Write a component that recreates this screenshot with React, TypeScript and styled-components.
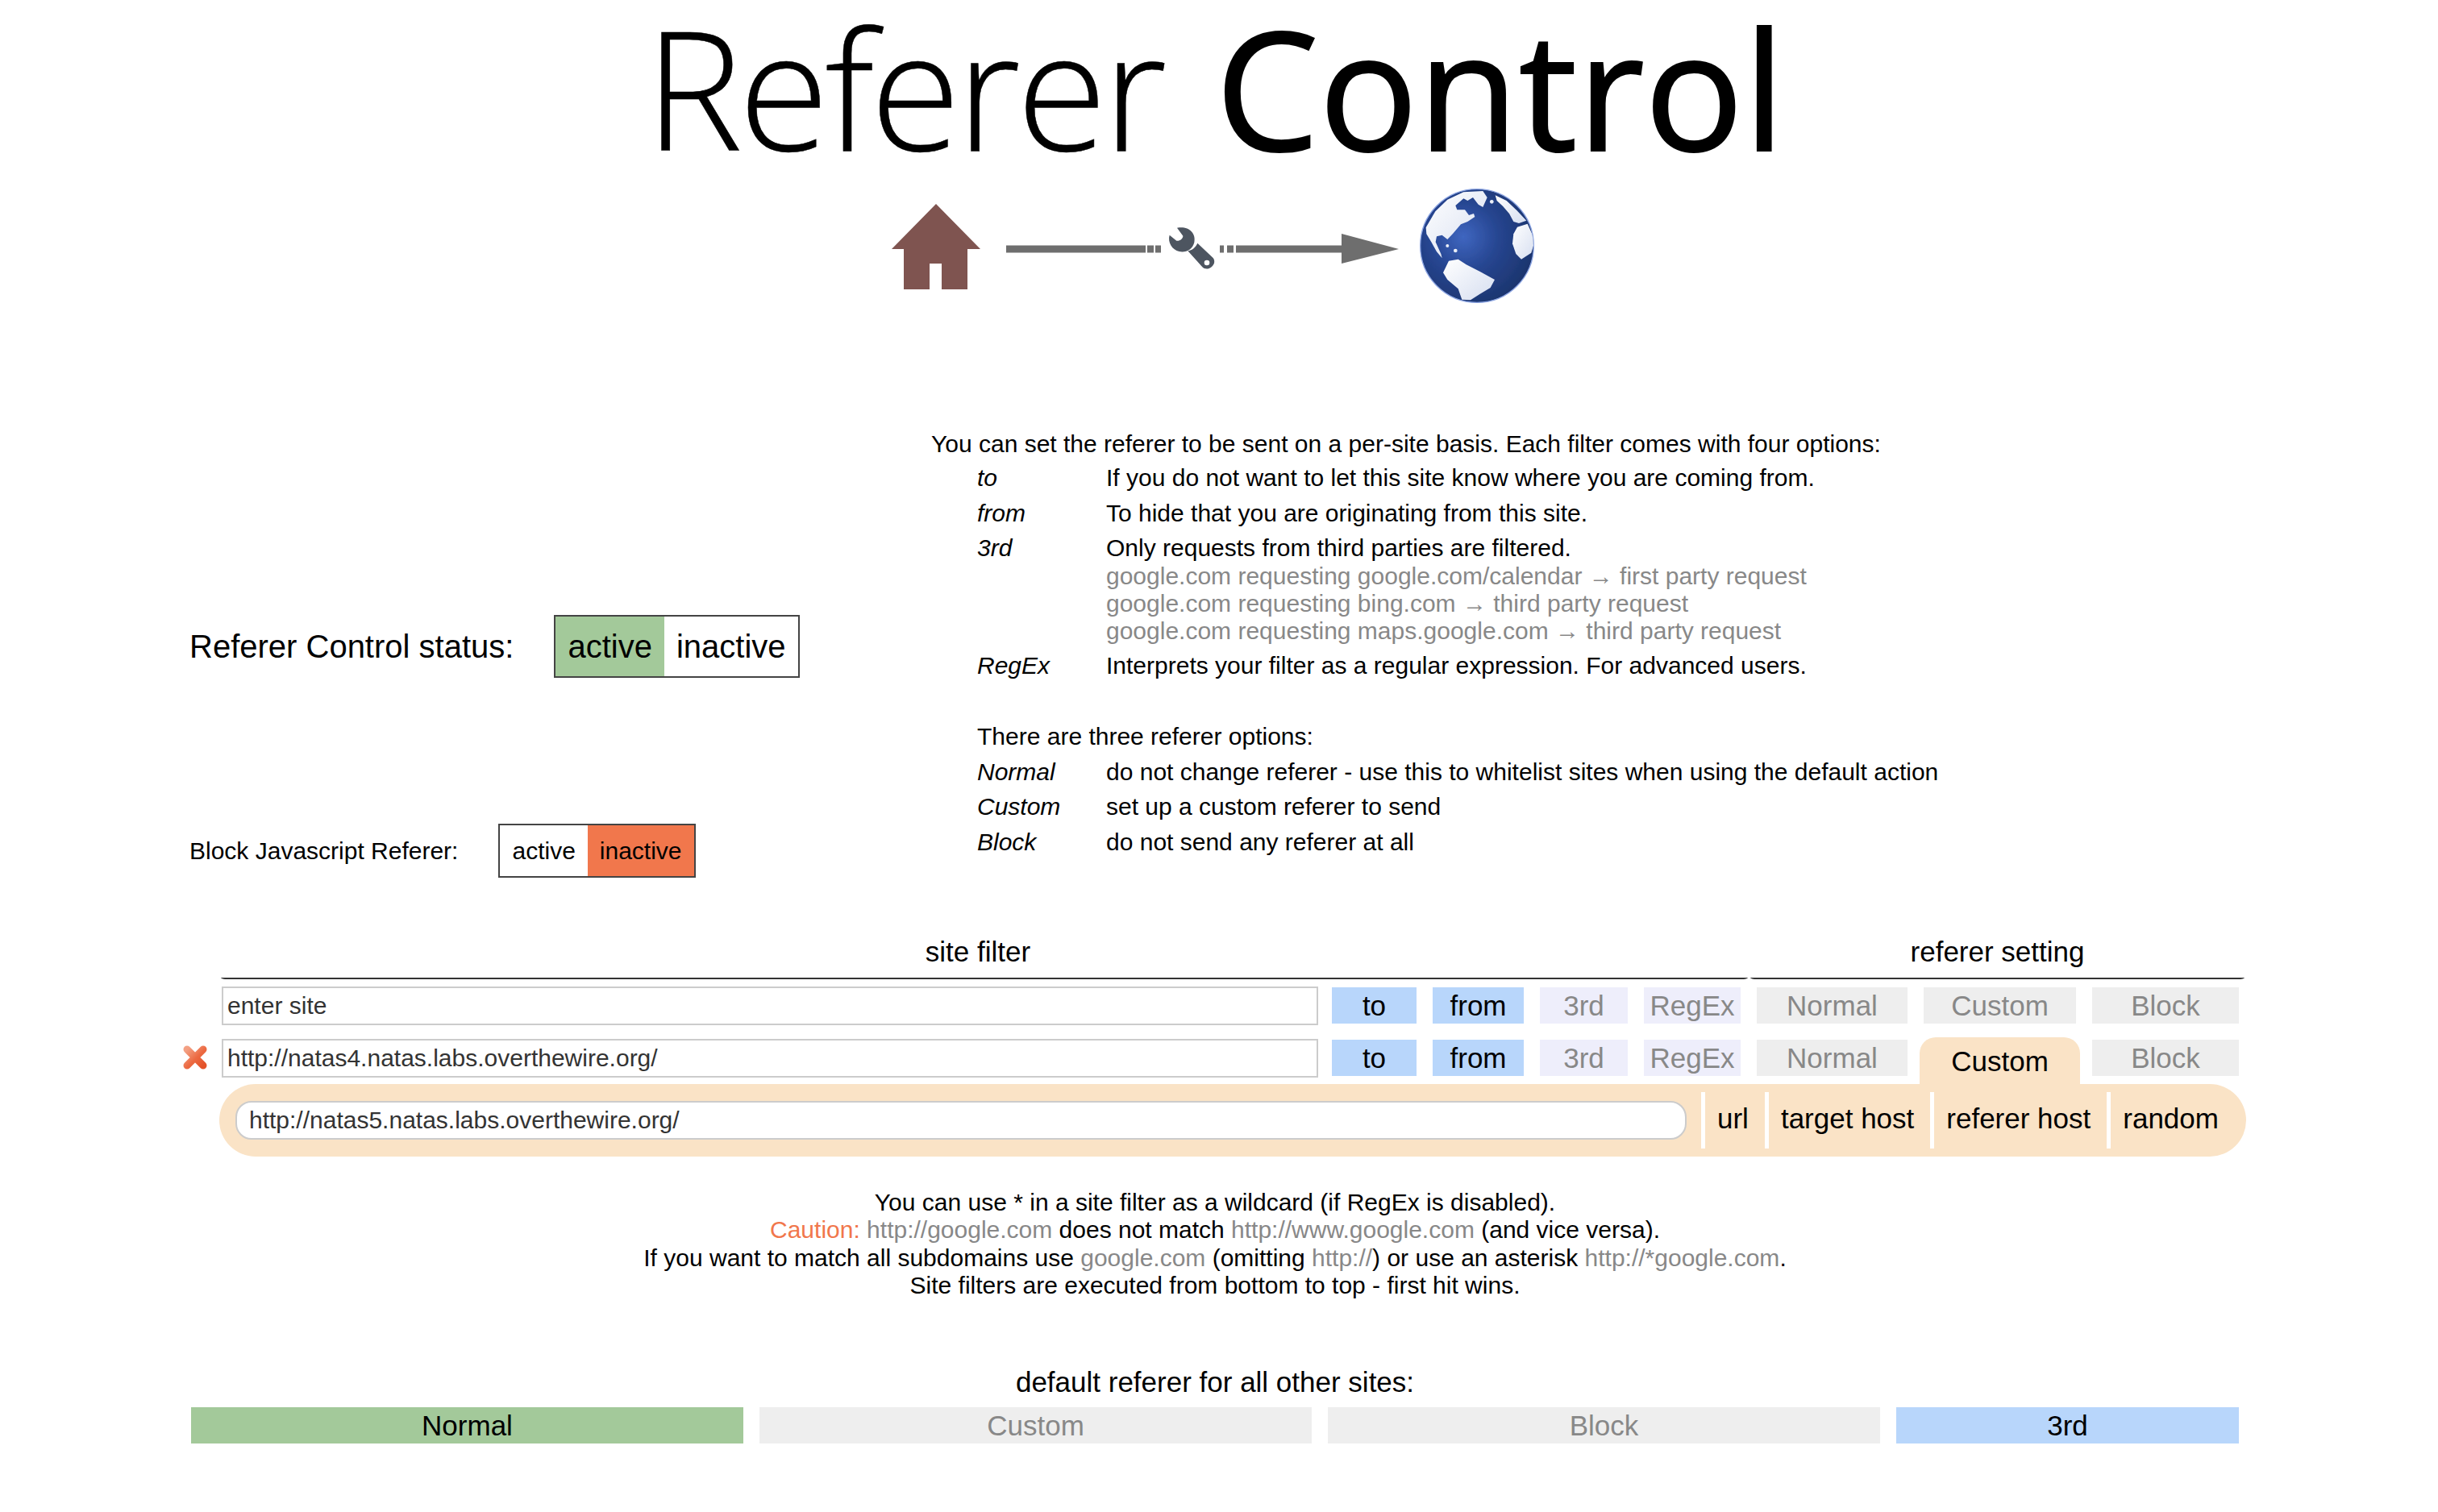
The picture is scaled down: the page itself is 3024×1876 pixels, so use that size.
import React from 'react';
import styled, { createGlobalStyle } from 'styled-components';

const GlobalStyle = createGlobalStyle`
  html, body {
    margin: 0;
    padding: 0;
    background: #fff;
    color: #000;
    font-family: 'Liberation Sans', Arial, sans-serif;
    font-size: 30px;
  }
`;

const Page = styled.div`
  width: 3014px;
  min-height: 1876px;
`;

const Logo = styled.h1`
  margin: 0;
  height: 222px;
  text-align: center;
  font-family: 'Open Sans', sans-serif;
  font-size: 204px;
  line-height: 216px;
  font-weight: 400;
  -webkit-text-stroke: 2px #000;
  white-space: nowrap;
`;

const LogoLight = styled.span`
  font-weight: 300;
  -webkit-text-stroke: 0.5px #000;
  letter-spacing: -5px;
  margin-right: 12px;
`;

const Diagram = styled.svg`
  display: block;
  margin: 8px 0 0 1100px;
`;

const Middle = styled.section`
  display: flex;
  margin-top: 154px;
  padding-left: 235px;
`;

const StatusColumn = styled.div`
  width: 920px;
  flex: none;
`;

const StatusRow = styled.div<{ $top: number; $size: number }>`
  display: flex;
  align-items: center;
  gap: 50px;
  margin-top: ${({ $top }) => $top}px;
  font-size: ${({ $size }) => $size}px;
`;

const Toggle = styled.div<{ $height: number }>`
  display: flex;
  height: ${({ $height }) => $height}px;
  border: 2px solid #444;
`;

const ToggleCell = styled.div<{ $bg?: string }>`
  display: flex;
  align-items: center;
  padding: 0 15px;
  background: ${({ $bg }) => $bg || '#fff'};
`;

const Docs = styled.div`
  line-height: 34.5px;
`;

const DocsIntro = styled.div`
  height: 37px;
`;

const DefList = styled.div`
  padding-left: 57px;
`;

const DefRow = styled.div`
  display: grid;
  grid-template-columns: 160px 1fr;
  padding: 5px 0 4px;
`;

const DefLead = styled.div`
  padding: 5px 0 4px;
`;

const Term = styled.div`
  font-style: italic;
`;

const Example = styled.div`
  color: #888;
  line-height: 34px;
  white-space: nowrap;
`;

const Spacer = styled.div`
  height: 45px;
`;

const FilterTable = styled.section`
  margin: 68px 0 0 226px;
  width: 2565px;
`;

const Headings = styled.div`
  display: flex;
  margin: 0 0 9px 48px;
  gap: 3px;
  font-size: 35px;
  text-align: center;
`;

const Heading = styled.div<{ $width: number; $inset?: number }>`
  box-sizing: border-box;
  width: ${({ $width }) => $width}px;
  height: 58px;
  padding-right: ${({ $inset }) => $inset || 0}px;
  line-height: 48px;
  border-bottom: 2px solid #333;
  border-radius: 0 0 8px 8px / 0 0 2px 2px;
`;

const FilterRow = styled.div<{ $height: number }>`
  display: flex;
  height: ${({ $height }) => $height}px;
`;

const IconSlot = styled.div`
  width: 49px;
  flex: none;
  padding-top: 8px;
`;

const FilterCells = styled.div`
  display: grid;
  grid-template-columns: 1357px 105px 113px 109px 120px 187px 189px 182px;
  column-gap: 20px;
  align-items: start;
`;

const SiteField = styled.div<{ $round?: boolean }>`
  box-sizing: border-box;
  height: 48px;
  border: 2px solid #ccc;
  border-radius: ${({ $round }) => ($round ? '20px' : '0')};
  padding: 0 ${({ $round }) => ($round ? '15px' : '5px')};
  background: #fff;
  color: #333;
  line-height: 43px;
  white-space: nowrap;
`;

const RowField = styled(SiteField)`
  width: 1360px;
`;

const ChoiceButton = styled.div<{ $bg: string; $on?: boolean }>`
  height: 45px;
  margin-top: 1px;
  background: ${({ $bg }) => $bg};
  color: ${({ $on }) => ($on ? '#000' : '#888')};
  font-size: 35px;
  line-height: 45px;
  text-align: center;
`;

const SelectedTab = styled.div`
  height: 58px;
  margin: -2px -5px 0;
  background: #fae3c6;
  border-radius: 20px 20px 0 0;
  font-size: 35px;
  line-height: 60px;
  text-align: center;
`;

const CustomBar = styled.div`
  box-sizing: border-box;
  display: flex;
  align-items: center;
  width: 2514px;
  height: 90px;
  margin-left: 46px;
  padding-left: 20px;
  background: #fae3c6;
  border-radius: 45px / 45px;
`;

const BarField = styled(SiteField)`
  width: 1800px;
  flex: none;
  margin-right: 18px;
`;

const BarOption = styled.div`
  height: 70px;
  padding: 0 20px 0 15px;
  border-left: 5px solid #fff;
  font-size: 35px;
  line-height: 66px;
  white-space: nowrap;
`;

const Notes = styled.div`
  margin-top: 40px;
  text-align: center;
  line-height: 34.3px;
`;

const Muted = styled.span`
  color: #888;
`;

const Caution = styled.span`
  color: #f1774c;
`;

const DefaultHeading = styled.div`
  margin-top: 82px;
  text-align: center;
  font-size: 35px;
  line-height: 42px;
`;

const DefaultRow = styled.div`
  display: grid;
  grid-template-columns: repeat(3, 685px) 425px;
  column-gap: 20px;
  margin: 10px 0 0 237px;
`;

const DefaultButton = styled(ChoiceButton)`
  margin-top: 0;
`;

const BLUE = '#b8d6fb';
const LAVENDER = '#eeeefb';
const GREY = '#eee';
const GREEN = '#a3c99a';
const ORANGE = '#f1774c';

const FlowDiagram: React.FC = () => (
  <Diagram width="810" height="150" viewBox="1100 230 810 150">
    <defs>
      <radialGradient id="ocean" cx="0.38" cy="0.42" r="0.62">
        <stop offset="0" stopColor="#3f66c0" />
        <stop offset="0.5" stopColor="#264590" />
        <stop offset="1" stopColor="#1d3670" />
      </radialGradient>
      <linearGradient id="land" x1="0" y1="0" x2="1" y2="1">
        <stop offset="0" stopColor="#ffffff" />
        <stop offset="1" stopColor="#d6def0" />
      </linearGradient>
      <clipPath id="globeClip">
        <circle cx="240" cy="240" r="210" />
      </clipPath>
      <filter id="soft" x="-5%" y="-5%" width="110%" height="110%">
        <feGaussianBlur stdDeviation="0.7" />
      </filter>
    </defs>

    <path d="M1161 253 L1216 309 H1200 V359 H1168 V327 H1153 V359 H1121 V309 H1106 Z" fill="#7f5450" />

    <g fill="#6e6e6e">
      <rect x="1248" y="304.500" width="173" height="9" />
      <rect x="1423" y="304.500" width="8" height="9" />
      <rect x="1433" y="304.500" width="7" height="9" />
      <rect x="1513" y="304.500" width="5" height="9" />
      <rect x="1522" y="304.500" width="8" height="9" />
      <rect x="1533" y="304.500" width="131" height="9" />
      <path d="M1664 290 L1735 309 L1664 327 Z" />
    </g>

    <g transform="translate(1410 270) scale(0.3333)" fill="#4d5560">
      <path d="M150 38 C190 30 222 55 214 92 C208 118 182 132 158 126 C132 120 114 92 122 65 L148 86 C160 88 172 78 172 68 Z" />
      <path fillRule="evenodd" d="M226 95 L284 150 C292 160 290 174 278 184 C266 194 252 192 244 184 L190 124 C206 122 220 110 226 95 Z M261 158 A10 10 0 1 0 261 178 A10 10 0 1 0 261 158 Z" />
    </g>

    <g transform="translate(1752 225) scale(0.3333)" filter="url(#soft)">
      <circle cx="240" cy="240" r="211" fill="url(#ocean)" stroke="#8ba4e2" strokeWidth="4" />
      <g clipPath="url(#globeClip)" fill="url(#land)">
        <path d="M50 172 L85 112 L130 68 L190 40 L262 36 L278 60 L262 96 L245 86 L225 60 L205 72 L190 64 L160 90 L166 106 L195 106 L210 126 L228 120 L232 132 L205 150 L180 160 L150 195 L130 216 L110 200 L90 205 L86 226 L106 270 L110 286 L90 262 L70 226 L52 196 Z" />
        <path d="M308 52 L350 72 L388 108 L424 146 L396 156 L376 150 L360 120 L336 92 L314 72 Z" />
        <path d="M390 170 L428 158 L456 220 L442 266 L405 290 L385 270 L372 232 L376 196 Z" />
        <path d="M135 296 L170 290 L200 310 L250 335 L306 366 L290 396 L250 420 L216 442 L184 440 L170 400 L130 366 L114 340 Z" />
        <circle cx="130" cy="240" r="6" />
        <circle cx="160" cy="258" r="7" />
        <circle cx="295" cy="76" r="7" />
      </g>
    </g>
  </Diagram>
);

const DeleteIcon: React.FC = () => (
  <svg width="32" height="30" viewBox="0 0 32 30">
    <defs>
      <linearGradient id="cross" x1="0" y1="0" x2="1" y2="1">
        <stop offset="0" stopColor="#f3a083" />
        <stop offset="0.55" stopColor="#ec6a42" />
        <stop offset="1" stopColor="#e4532a" />
      </linearGradient>
    </defs>
    <path d="M6 5 L26 25 M26 5 L6 25" stroke="url(#cross)" strokeWidth="9" strokeLinecap="round" fill="none" />
  </svg>
);

type ChoiceProps = { selectedCustom?: boolean };

const FilterChoices: React.FC<ChoiceProps> = ({ selectedCustom }) => (
  <>
    <ChoiceButton $bg={BLUE} $on>to</ChoiceButton>
    <ChoiceButton $bg={BLUE} $on>from</ChoiceButton>
    <ChoiceButton $bg={LAVENDER}>3rd</ChoiceButton>
    <ChoiceButton $bg={LAVENDER}>RegEx</ChoiceButton>
    <ChoiceButton $bg={GREY}>Normal</ChoiceButton>
    {selectedCustom ? <SelectedTab>Custom</SelectedTab> : <ChoiceButton $bg={GREY}>Custom</ChoiceButton>}
    <ChoiceButton $bg={GREY}>Block</ChoiceButton>
  </>
);

export default function App() {
  return (
    <Page>
      <GlobalStyle />
      <Logo>
        <LogoLight>Referer</LogoLight> Control
      </Logo>
      <FlowDiagram />

      <Middle>
        <StatusColumn>
          <StatusRow $top={229} $size={40}>
            Referer Control status:
            <Toggle $height={74}>
              <ToggleCell $bg={GREEN}>active</ToggleCell>
              <ToggleCell>inactive</ToggleCell>
            </Toggle>
          </StatusRow>
          <StatusRow $top={181} $size={30}>
            Block Javascript Referer:
            <Toggle $height={63}>
              <ToggleCell>active</ToggleCell>
              <ToggleCell $bg={ORANGE}>inactive</ToggleCell>
            </Toggle>
          </StatusRow>
        </StatusColumn>

        <Docs>
          <DocsIntro>You can set the referer to be sent on a per-site basis. Each filter comes with four options:</DocsIntro>
          <DefList>
            <DefRow>
              <Term>to</Term>
              <div>If you do not want to let this site know where you are coming from.</div>
            </DefRow>
            <DefRow>
              <Term>from</Term>
              <div>To hide that you are originating from this site.</div>
            </DefRow>
            <DefRow>
              <Term>3rd</Term>
              <div>
                Only requests from third parties are filtered.
                <Example>google.com requesting google.com/calendar → first party request</Example>
                <Example>google.com requesting bing.com → third party request</Example>
                <Example>google.com requesting maps.google.com → third party request</Example>
              </div>
            </DefRow>
            <DefRow>
              <Term>RegEx</Term>
              <div>Interprets your filter as a regular expression. For advanced users.</div>
            </DefRow>
            <Spacer />
            <DefLead>There are three referer options:</DefLead>
            <DefRow>
              <Term>Normal</Term>
              <div>do not change referer - use this to whitelist sites when using the default action</div>
            </DefRow>
            <DefRow>
              <Term>Custom</Term>
              <div>set up a custom referer to send</div>
            </DefRow>
            <DefRow>
              <Term>Block</Term>
              <div>do not send any referer at all</div>
            </DefRow>
          </DefList>
        </Docs>
      </Middle>

      <FilterTable>
        <Headings>
          <Heading $width={1894} $inset={16}>site filter</Heading>
          <Heading $width={613}>referer setting</Heading>
        </Headings>
        <FilterRow $height={65}>
          <IconSlot />
          <FilterCells>
            <RowField>enter site</RowField>
            <FilterChoices />
          </FilterCells>
        </FilterRow>
        <FilterRow $height={56}>
          <IconSlot>
            <DeleteIcon />
          </IconSlot>
          <FilterCells>
            <RowField>http://natas4.natas.labs.overthewire.org/</RowField>
            <FilterChoices selectedCustom />
          </FilterCells>
        </FilterRow>
        <CustomBar>
          <BarField $round>http://natas5.natas.labs.overthewire.org/</BarField>
          <BarOption>url</BarOption>
          <BarOption>target host</BarOption>
          <BarOption>referer host</BarOption>
          <BarOption>random</BarOption>
        </CustomBar>
      </FilterTable>

      <Notes>
        <div>You can use * in a site filter as a wildcard (if RegEx is disabled).</div>
        <div>
          <Caution>Caution:</Caution> <Muted>http://google.com</Muted> does not match <Muted>http://www.google.com</Muted> (and vice versa).
        </div>
        <div>
          If you want to match all subdomains use <Muted>google.com</Muted> (omitting <Muted>http://</Muted>) or use an asterisk <Muted>http://*google.com</Muted>.
        </div>
        <div>Site filters are executed from bottom to top - first hit wins.</div>
      </Notes>

      <DefaultHeading>default referer for all other sites:</DefaultHeading>
      <DefaultRow>
        <DefaultButton $bg={GREEN} $on>Normal</DefaultButton>
        <DefaultButton $bg={GREY}>Custom</DefaultButton>
        <DefaultButton $bg={GREY}>Block</DefaultButton>
        <DefaultButton $bg={BLUE} $on>3rd</DefaultButton>
      </DefaultRow>
    </Page>
  );
}
